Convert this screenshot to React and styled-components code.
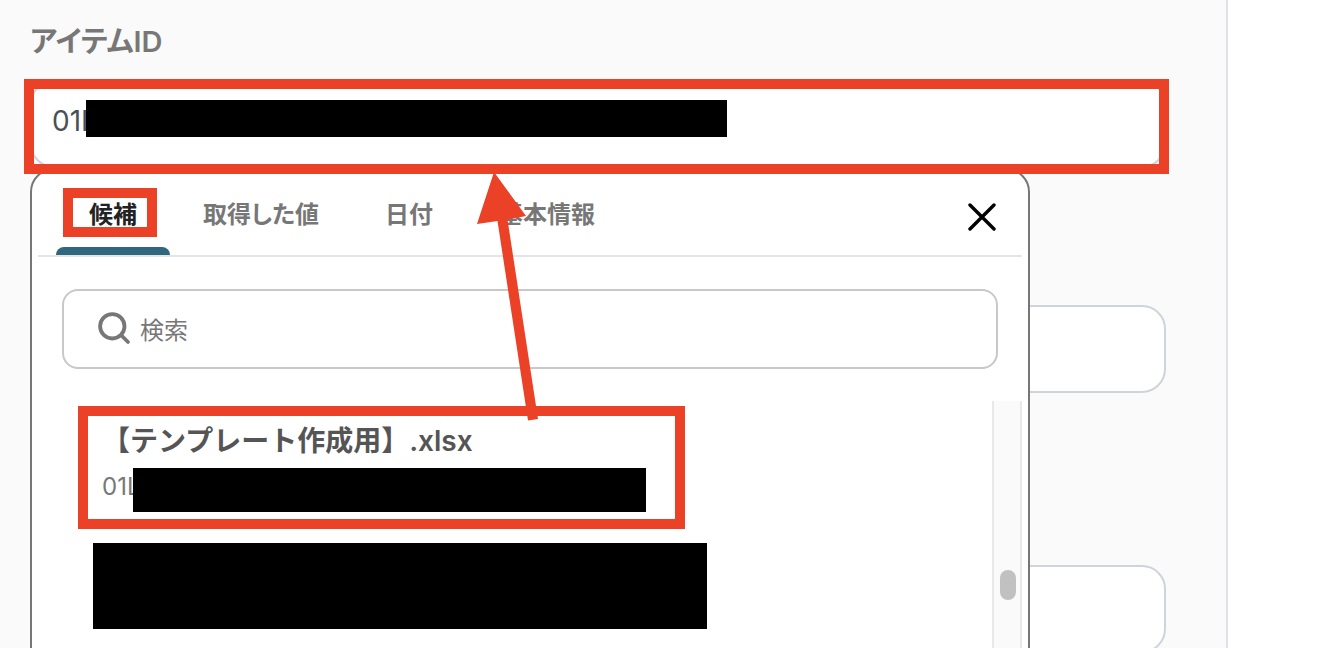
import React from "react";
import styled, { createGlobalStyle } from "styled-components";

const RED = "#ea4127";

const GlobalStyle = createGlobalStyle`
  * { box-sizing: border-box; }
  body {
    margin: 0;
    background: #ffffff;
    font-family: Inter, "Noto Sans CJK JP", sans-serif;
  }
  button, input {
    font-family: inherit;
    border: 0;
    background: none;
    padding: 0;
    margin: 0;
  }
`;

const Page = styled.main`
  display: flex;
  height: 100vh;
  overflow: hidden;
  padding-right: 112px;
`;

const Panel = styled.form`
  flex: 1;
  min-width: 0;
  padding: 24px 60px 0 30px;
  background: #fafafa;
  border-right: 2px solid #dee2e6;
`;

const Label = styled.label`
  display: block;
  margin-bottom: 20px;
  font-size: 29px;
  line-height: 36px;
  font-weight: 600;
  font-feature-settings: "palt";
  color: #777777;
`;

const Field = styled.div`
  position: relative;
  margin-top: ${(p) => p.$space || 0}px;
`;

const TextInput = styled.input`
  display: block;
  width: 100%;
  height: 88px;
  padding: 0 20px 6px;
  border: 2px solid #ced4da;
  border-radius: 24px;
  background: #ffffff;
  color: #495057;
  font-size: 28px;
  outline: none;
`;

const Frame = styled.span`
  position: absolute;
  inset: ${(p) => p.$inset};
  border: 10px solid ${RED};
  pointer-events: none;
  z-index: 3;
`;

const Mask = styled.span`
  position: absolute;
  top: ${(p) => p.$top}px;
  left: ${(p) => p.$left}px;
  width: ${(p) => p.$width}px;
  height: ${(p) => p.$height}px;
  background: #000000;
`;

const Popover = styled.section`
  position: absolute;
  top: 100%;
  left: 0;
  z-index: 2;
  width: 100%;
  max-width: 1000px;
  padding: 6px;
  border: 2px solid #777777;
  border-radius: 24px;
  background: #ffffff;
`;

const Header = styled.header`
  display: flex;
  align-items: stretch;
  justify-content: space-between;
  padding: 0 20px 0 18px;
  border-bottom: 2px solid #e5e5e5;
`;

const Tabs = styled.div`
  display: flex;
`;

const Tab = styled.button`
  position: relative;
  height: 79px;
  padding: 0 33px 6px;
  font-size: 24px;
  font-weight: 600;
  font-feature-settings: "palt";
  color: ${(p) => (p.$active ? "#222222" : "#777777")};
  &::after {
    content: "";
    position: absolute;
    inset: auto 0 0;
    height: 8px;
    border-radius: 8px 8px 0 0;
    background: ${(p) => (p.$active ? "#2f6680" : "transparent")};
  }
`;

const CloseButton = styled.button`
  display: flex;
  align-items: center;
  justify-content: center;
  width: 40px;
  padding-top: 2px;
`;

const SearchBox = styled.label`
  display: flex;
  align-items: center;
  gap: 8px;
  height: 80px;
  margin: 32px 24px;
  padding: 0 32px;
  border: 2px solid #c8c8c8;
  border-radius: 16px;
`;

const SearchInput = styled.input`
  flex: 1;
  min-width: 0;
  padding-top: 2px;
  font-size: 24px;
  outline: none;
  &::placeholder { color: #777777; opacity: 1; }
`;

const Results = styled.div`
  display: flex;
  min-height: 320px;
`;

const List = styled.ul`
  flex: 1;
  min-width: 0;
  margin: 0;
  padding: 5px 40px;
  list-style: none;
`;

const Item = styled.li`
  position: relative;
  max-width: 607px;
`;

const ItemButton = styled.button`
  display: flex;
  flex-direction: column;
  align-items: flex-start;
  gap: 12px;
  width: 100%;
  padding: 17px 24px 26px;
  text-align: left;
`;

const ItemTitle = styled.span`
  font-size: 28px;
  line-height: 36px;
  font-weight: 600;
  color: #555555;
  white-space: nowrap;
`;

const ItemId = styled.span`
  font-size: 24px;
  line-height: 32px;
  color: #777777;
`;

const MaskedItem = styled.button`
  display: block;
  width: 614px;
  height: 86px;
  margin: 14px 0 0 15px;
  background: #000000;
`;

const ScrollTrack = styled.div`
  width: 30px;
  padding: 169px 0 0 6px;
  border: solid #e8e8e8;
  border-width: 0 2px;
  background: #fafafa;
`;

const ScrollThumb = styled.div`
  width: 16px;
  height: 30px;
  border-radius: 8px;
  background: #c1c1c1;
`;

const Arrow = styled.svg`
  position: absolute;
  top: 0;
  left: 440px;
  z-index: 4;
  pointer-events: none;
`;

const TABS = ["候補", "取得した値", "日付", "基本情報"];

export default function App() {
  return (
    <>
      <GlobalStyle />
      <Page>
        <Panel onSubmit={(e) => e.preventDefault()}>
          <Label htmlFor="item-id">アイテムID</Label>
          <Field>
            <TextInput id="item-id" defaultValue="01L" />
            <Mask $top={20} $left={56} $width={641} $height={37} />
            <Frame $inset="-1px -3px -6px -6px" />
            <Popover>
              <Header>
                <Tabs role="tablist">
                  {TABS.map((name, i) => (
                    <Tab key={name} type="button" role="tab" aria-selected={i === 0} $active={i === 0}>
                      {name}
                      {i === 0 && <Frame $inset="12px 13px 18px 7px" />}
                    </Tab>
                  ))}
                </Tabs>
                <CloseButton type="button" aria-label="閉じる">
                  <svg width="28" height="28" viewBox="0 0 28 28" fill="none" stroke="#000" strokeWidth="3.4" strokeLinecap="round">
                    <path d="M2 2 26 26M26 2 2 26" />
                  </svg>
                </CloseButton>
              </Header>
              <SearchBox>
                <svg width="36" height="36" viewBox="0 0 36 36" fill="none" stroke="#777" strokeWidth="3.8" strokeLinecap="round">
                  <circle cx="16.3" cy="15.3" r="12.2" />
                  <path d="M25.5 24.5 32 31" />
                </svg>
                <SearchInput type="text" placeholder="検索" aria-label="検索" />
              </SearchBox>
              <Results>
                <List>
                  <Item>
                    <ItemButton type="button">
                      <ItemTitle>【テンプレート作成用】.xlsx</ItemTitle>
                      <ItemId>01L</ItemId>
                    </ItemButton>
                    <Mask $top={62} $left={55} $width={513} $height={44} />
                    <Frame $inset="0" />
                  </Item>
                  <Item>
                    <MaskedItem type="button" aria-label="候補" />
                  </Item>
                </List>
                <ScrollTrack>
                  <ScrollThumb />
                </ScrollTrack>
              </Results>
              <Arrow width="70" height="256" viewBox="0 0 70 256" fill={RED}>
                <path d="M22 2 54 46 35.5 49.5 66 249 56 250.5 25.5 51 5 54Z" />
              </Arrow>
            </Popover>
          </Field>
          <Field $space={137}>
            <TextInput aria-label="項目2" />
          </Field>
          <Field $space={172}>
            <TextInput aria-label="項目3" />
          </Field>
        </Panel>
      </Page>
    </>
  );
}
